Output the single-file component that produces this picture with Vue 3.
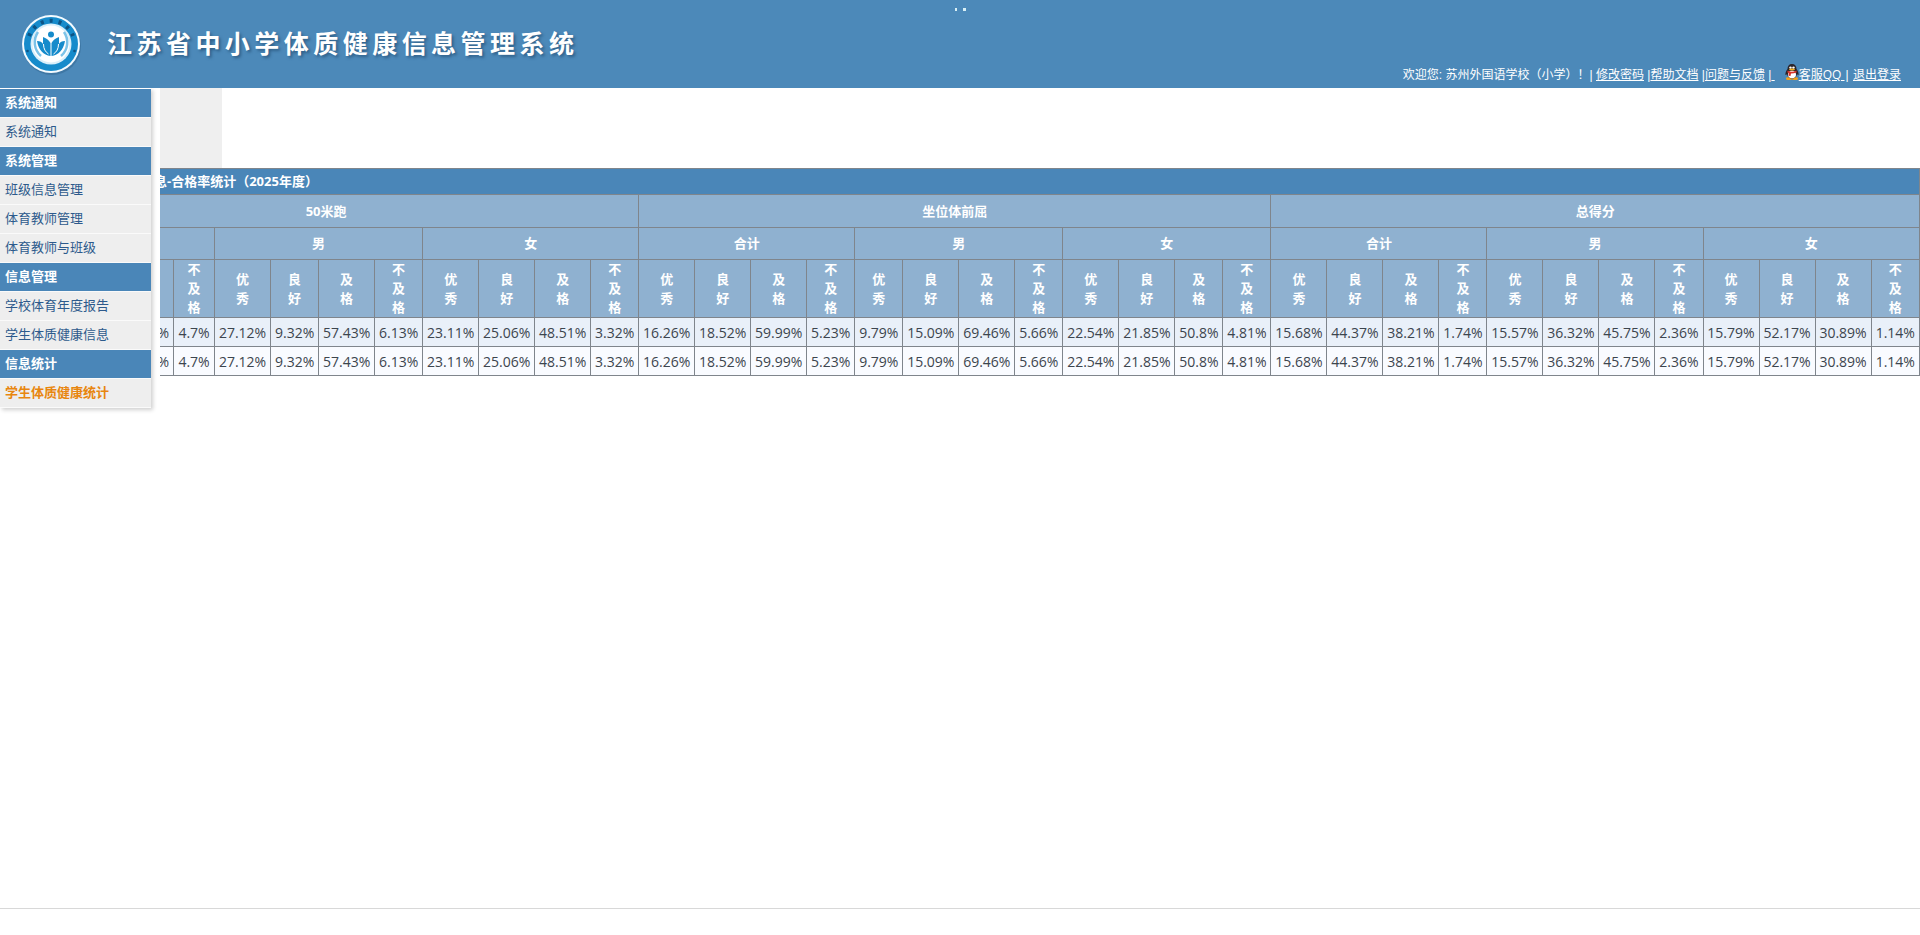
<script setup>
const menu = [
  { title: '系统通知', items: ['系统通知'] },
  { title: '系统管理', items: ['班级信息管理', '体育教师管理', '体育教师与班级'] },
  { title: '信息管理', items: ['学校体育年度报告', '学生体质健康信息'] },
  { title: '信息统计', items: ['学生体质健康统计'] },
]
const active = '学生体质健康统计'

const grades = ['优秀', '良好', '及格', '不及格']

const values = [
  '', '', '%', '4.7%',
  '27.12%', '9.32%', '57.43%', '6.13%',
  '23.11%', '25.06%', '48.51%', '3.32%',
  '16.26%', '18.52%', '59.99%', '5.23%',
  '9.79%', '15.09%', '69.46%', '5.66%',
  '22.54%', '21.85%', '50.8%', '4.81%',
  '15.68%', '44.37%', '38.21%', '1.74%',
  '15.57%', '36.32%', '45.75%', '2.36%',
  '15.79%', '52.17%', '30.89%', '1.14%',
]
const rows = [values, values]

const sizes = { 4: 'narrow', 5: 'medium', 6: 'wide' }
const columns = values.map((v, i) => (i === 1 ? 'medium' : sizes[v.length] || 'wide'))

const events = ['50米跑', '坐位体前屈', '总得分']
const groups = ['', '男', '女', '合计', '男', '女', '合计', '男', '女']
const gradeCells = values.map((_, i) => (i < 3 ? '' : grades[i % 4]))
</script>

<template>
  <div class="page">
    <header class="top">
      <svg class="logo" viewBox="0 0 64 64" aria-hidden="true">
        <circle cx="33" cy="34" r="29" fill="#2f628c" opacity=".45" />
        <circle cx="32" cy="32" r="29" fill="#f4fbff" />
        <circle cx="32" cy="32" r="27" fill="#168bcb" />
        <path d="M10 24A23.500 23.500 0 0 1 54 24" fill="none" stroke="#0d5485" stroke-width="4" stroke-dasharray="3 6" />
        <circle cx="32" cy="32" r="20.500" fill="#d9effa" />
        <circle cx="32" cy="32" r="18.500" fill="#fff" />
        <path d="M19 20a18 18 0 0 0 3 24M45 20a18 18 0 0 1-3 24" fill="none" stroke="#7cc3e8" stroke-width="2.500" />
        <circle cx="32" cy="22.500" r="3" fill="#168bcb" />
        <path d="M31.500 44c-7-1-12-6-13.500-15 3 0 5 1 6 3v-7c3 1 6 3 7.500 6zM32.500 44c7-1 12-6 13.500-15-3 0-5 1-6 3v-7c-3 1-6 3-7.500 6z" fill="#168bcb" />
        <path d="M24.500 32c0 5 2 8 5 10M39.500 32c0 5-2 8-5 10" fill="none" stroke="#fff" stroke-width="1" />
        <circle cx="8.500" cy="39" r="1.300" fill="#0d5485" />
        <circle cx="55.500" cy="39" r="1.300" fill="#0d5485" />
      </svg>
      <h1>江苏省中小学体质健康信息管理系统</h1>
      <svg class="dots" viewBox="0 0 12 4" aria-hidden="true">
        <rect x="0" y="1" width="2" height="3" fill="#d8f0f6" />
        <rect x="8" y="1" width="3" height="3" fill="#d8f0f6" />
      </svg>
      <nav class="user">
        <span>欢迎您: 苏州外国语学校（小学）！| </span>
        <a href="#">修改密码</a>
        <span> |</span><a href="#">帮助文档</a>
        <span> |</span><a href="#">问题与反馈</a>
        <span> |</span><a href="#" class="qq"><span class="lead">&nbsp;</span><svg viewBox="0 0 14 16" aria-hidden="true">
          <ellipse cx="4" cy="14.500" rx="3" ry="1.500" fill="#f0a01c" />
          <ellipse cx="10" cy="14.500" rx="3" ry="1.500" fill="#f0a01c" />
          <path d="M7 0c3 0 4.500 2 4.500 5 1.500 2 2.300 4 2 6-.6.300-1-.2-1.500-1-.5 3-2.500 4.500-5 4.500S2.500 13 2 10c-.5.800-1 1.300-1.500 1-.3-2 .5-4 2-6C2.500 2 4 0 7 0z" fill="#2b2428" />
          <ellipse cx="7" cy="10.500" rx="4" ry="3.800" fill="#fff" />
          <circle cx="5.500" cy="3.600" r="1.200" fill="#fff" />
          <circle cx="8.500" cy="3.600" r="1.200" fill="#fff" />
          <ellipse cx="7" cy="5.600" rx="3" ry="1" fill="#f5b021" />
          <path d="M2.500 6.500c3 1.600 6 1.600 9 0v2c-2 .8-4 1-5.500.9L5.500 12l-2-.3.2-2.700-1.200-.6z" fill="#d8322a" />
        </svg>客服QQ&nbsp;</a><span class="last">| </span>
        <a href="#">退出登录</a>
      </nav>
    </header>

    <div class="body">
      <aside class="side">
        <section v-for="group in menu" :key="group.title">
          <h2>{{ group.title }}</h2>
          <a v-for="item in group.items" :key="item" href="#" :class="{ active: item === active }">{{ item }}</a>
        </section>
      </aside>

      <main class="content">
        <div class="filler"></div>
        <table>
          <colgroup>
            <col v-for="(size, i) in columns" :key="i" :class="size" />
          </colgroup>
          <thead>
            <tr class="title">
              <th :colspan="values.length">息-合格率统计（2025年度）</th>
            </tr>
            <tr class="event">
              <th v-for="name in events" :key="name" colspan="12">{{ name }}</th>
            </tr>
            <tr class="group">
              <th v-for="(name, i) in groups" :key="i" colspan="4">{{ name }}</th>
            </tr>
            <tr class="grade">
              <th v-for="(name, i) in gradeCells" :key="i"><span>{{ name }}</span></th>
            </tr>
          </thead>
          <tbody>
            <tr v-for="(row, r) in rows" :key="r">
              <td v-for="(value, i) in row" :key="i" :class="{ cut: value === '%' }">{{ value }}</td>
            </tr>
          </tbody>
        </table>
      </main>
    </div>
    <footer class="foot"></footer>
  </div>
</template>

<style>
body {
  margin: 0;
  background: #fff;
}
</style>

<style scoped>
.page {
  display: flex;
  flex-direction: column;
  min-height: 100vh;
  font-family: "Open Sans", "Noto Sans CJK SC", sans-serif;
  font-size: 13px;
}
.top {
  position: relative;
  display: flex;
  align-items: center;
  height: 88px;
  box-sizing: border-box;
  padding-left: 19px;
  background: #4c89b9;
  color: #fff;
}
.logo {
  width: 64px;
  height: 64px;
  flex: none;
}
.top h1 {
  width: 467px;
  margin: 0 0 4px 24px;
  font-size: 25px;
  line-height: 32px;
  font-weight: 700;
  font-family: "Noto Sans CJK SC", sans-serif;
  text-align: justify;
  text-align-last: justify;
  white-space: nowrap;
  text-shadow: 2px 2px 3px #2f5f88;
}
.dots {
  position: absolute;
  top: 7px;
  left: 50%;
  width: 12px;
  height: 4px;
  margin-left: -5px;
}
.user {
  align-self: flex-end;
  margin-left: auto;
  padding: 0 19px 4px 0;
  font-size: 12px;
  line-height: 18px;
  white-space: nowrap;
}
.user span {
  font-family: "Liberation Sans", "Noto Sans CJK SC", sans-serif;
}
.user a {
  color: #fff;
  text-decoration: underline;
}
.user .lead {
  margin-right: 10px;
}
.user .last {
  margin: 0 1px;
}
.qq svg {
  width: 14px;
  height: 16px;
  vertical-align: -1px;
}
.body {
  display: flex;
  flex: 1;
  align-items: flex-start;
}
.side {
  flex: none;
  width: 151px;
  margin-right: 9px;
  border-top: 1px solid #fff;
  box-shadow: 2px 2px 4px #d0d0d0;
}
.side h2,
.side a {
  display: block;
  height: 28px;
  margin: 0;
  padding-left: 5px;
  border-bottom: 1px solid #fafafa;
  font-size: 13px;
  line-height: 27px;
}
.side h2 {
  background: #4a86b8;
  color: #fff;
  font-weight: 700;
}
.side a {
  background: #eee;
  color: #2d5a8c;
  text-decoration: none;
}
.side a.active {
  color: #e8860f;
  font-weight: 700;
}
.content {
  flex: 1;
  min-width: 0;
  overflow: hidden;
}
.filler {
  width: 62px;
  height: 80px;
  background: #efefef;
}
table {
  width: calc(100% + 147px);
  margin-left: -147px;
  border-collapse: collapse;
  table-layout: fixed;
  text-align: center;
}
.narrow {
  width: 41px;
}
.medium {
  width: 48px;
}
.wide {
  width: 56px;
}
th,
td {
  padding: 0;
  border: 1px solid #7f858c;
}
th {
  background: #8fb1d0;
  color: #fff;
  font-weight: 700;
  line-height: 19px;
}
.title {
  height: 26px;
}
.title th {
  padding-left: 140px;
  background: #4a86b8;
  text-align: left;
}
.event {
  height: 33px;
}
.group {
  height: 32px;
}
.grade span {
  display: block;
  width: 13px;
  margin: 0 auto;
}
tbody tr {
  height: 29px;
  background: #f9fbff;
}
tbody tr:nth-child(odd) {
  background: #e9f0f9;
}
td {
  color: #3c454e;
  font-size: 14px;
  line-height: 19px;
}
td.cut {
  padding-right: 4px;
  text-align: right;
}
.foot {
  height: 26px;
  border-top: 1px solid #d8d8d8;
}
</style>
